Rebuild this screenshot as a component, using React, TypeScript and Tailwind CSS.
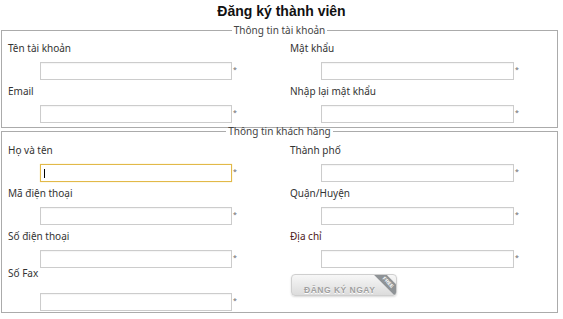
import React from 'react'

type Field = {
  label: string
  focused?: boolean
  labelClass?: string
  gapClass?: string
  rowClass?: string
}

function Input({ focused, wide }: { focused?: boolean; wide?: boolean }) {
  return (
    <div className="flex items-start">
      <div
        className={
          'relative h-[18px] bg-white border ' +
          (wide ? 'w-[193px] ' : 'w-[192px] ') +
          (focused
            ? 'border-[#e2b949] shadow-[0_0_1px_#f0d88a]'
            : 'border-[#cccccc] shadow-[inset_0_1px_1px_rgba(0,0,0,0.04)]')
        }
      >
        {focused && <span className="absolute left-[3px] top-[4px] w-px h-[9px] bg-black" />}
      </div>
      <span className="ml-[1px] mt-[4px] text-[7px] leading-[7px] text-[#666]">*</span>
    </div>
  )
}

function Column({ fields, inset, wide, children }: { fields: Field[]; inset: string; wide?: boolean; children?: React.ReactNode }) {
  return (
    <div className="flex flex-col">
      {fields.map((f) => (
        <div key={f.label} className={'flex flex-col ' + (f.rowClass ?? 'mt-[4px] first:mt-0')}>
          <label className={'pl-[6px] text-[10px] leading-[14px] ' + (f.labelClass ?? 'text-[#333]')}>
            {f.label}
          </label>
          <div className={inset + ' ' + (f.gapClass ?? 'mt-[7px]')}>
            <Input focused={f.focused} wide={wide} />
          </div>
        </div>
      ))}
      {children}
    </div>
  )
}

function Section({ title, className, children }: { title: string; className?: string; children: React.ReactNode }) {
  return (
    <fieldset className={'border border-[#ababab] mx-[1px] w-[557px] ' + (className ?? '')}>
      <legend className="mx-auto px-[2px] text-[10px] leading-[10px] text-[#444]">{title}</legend>
      {children}
    </fieldset>
  )
}

export default function App() {
  return (
    <div className="w-[563px] h-[319px] bg-white font-['Noto_Sans',sans-serif] overflow-hidden">
      <h1 className="pt-[3px] text-center text-[14px] leading-[16px] font-bold text-[#111] font-['Liberation_Sans',Arial,sans-serif]">
        Đăng ký thành viên
      </h1>

      <Section title="Thông tin tài khoản" className="mt-[6px] pt-[6px] pb-[4px]">
        <div className="grid grid-cols-[282px_1fr]">
          <Column
            inset="ml-[38px]"
            fields={[{ label: 'Tên tài khoản' }, { label: 'Email' }]}
          />
          <Column
            inset="ml-[37px]"
            wide
            fields={[{ label: 'Mật khẩu' }, { label: 'Nhập lại mật khẩu' }]}
          />
        </div>
      </Section>

      <Section title="Thông tin khách hàng" className="-mt-[2px] pt-[7px] pb-[1px]">
        <div className="grid grid-cols-[282px_1fr]">
          <Column
            inset="ml-[38px]"
            fields={[
              { label: 'Họ và tên', focused: true },
              { label: 'Mã điện thoại' },
              { label: 'Số điện thoại' },
              { label: 'Số Fax', rowClass: '-mt-[2px]', gapClass: 'mt-[13px]' },
            ]}
          />
          <Column
            inset="ml-[37px]"
            wide
            fields={[
              { label: 'Thành phố' },
              { label: 'Quận/Huyện' },
              { label: 'Địa chỉ', labelClass: 'text-[#4d2020]' },
            ]}
          >
            <button className="relative mt-[6px] ml-[7px] w-[106px] h-[22px] overflow-hidden rounded-[4px] border border-[#cfcfcf] bg-gradient-to-b from-[#f7f7f7] to-[#dcdcdc] shadow-[0_1px_2px_rgba(0,0,0,0.15)] text-left">
              <span className="pl-[12px] text-[8.5px] font-bold tracking-[0.5px] text-[#a0a0a0] font-['Liberation_Sans',Arial,sans-serif] [text-shadow:0_1px_0_#fff]">
                ĐĂNG KÝ NGAY
              </span>
              <span className="absolute left-[78px] top-[3px] w-[36px] h-[9px] rotate-45 bg-[#8f9396] flex items-center justify-center text-[5px] leading-[5px] font-bold text-white font-['Liberation_Sans',Arial,sans-serif]">
                FREE
              </span>
            </button>
          </Column>
        </div>
      </Section>
    </div>
  )
}
